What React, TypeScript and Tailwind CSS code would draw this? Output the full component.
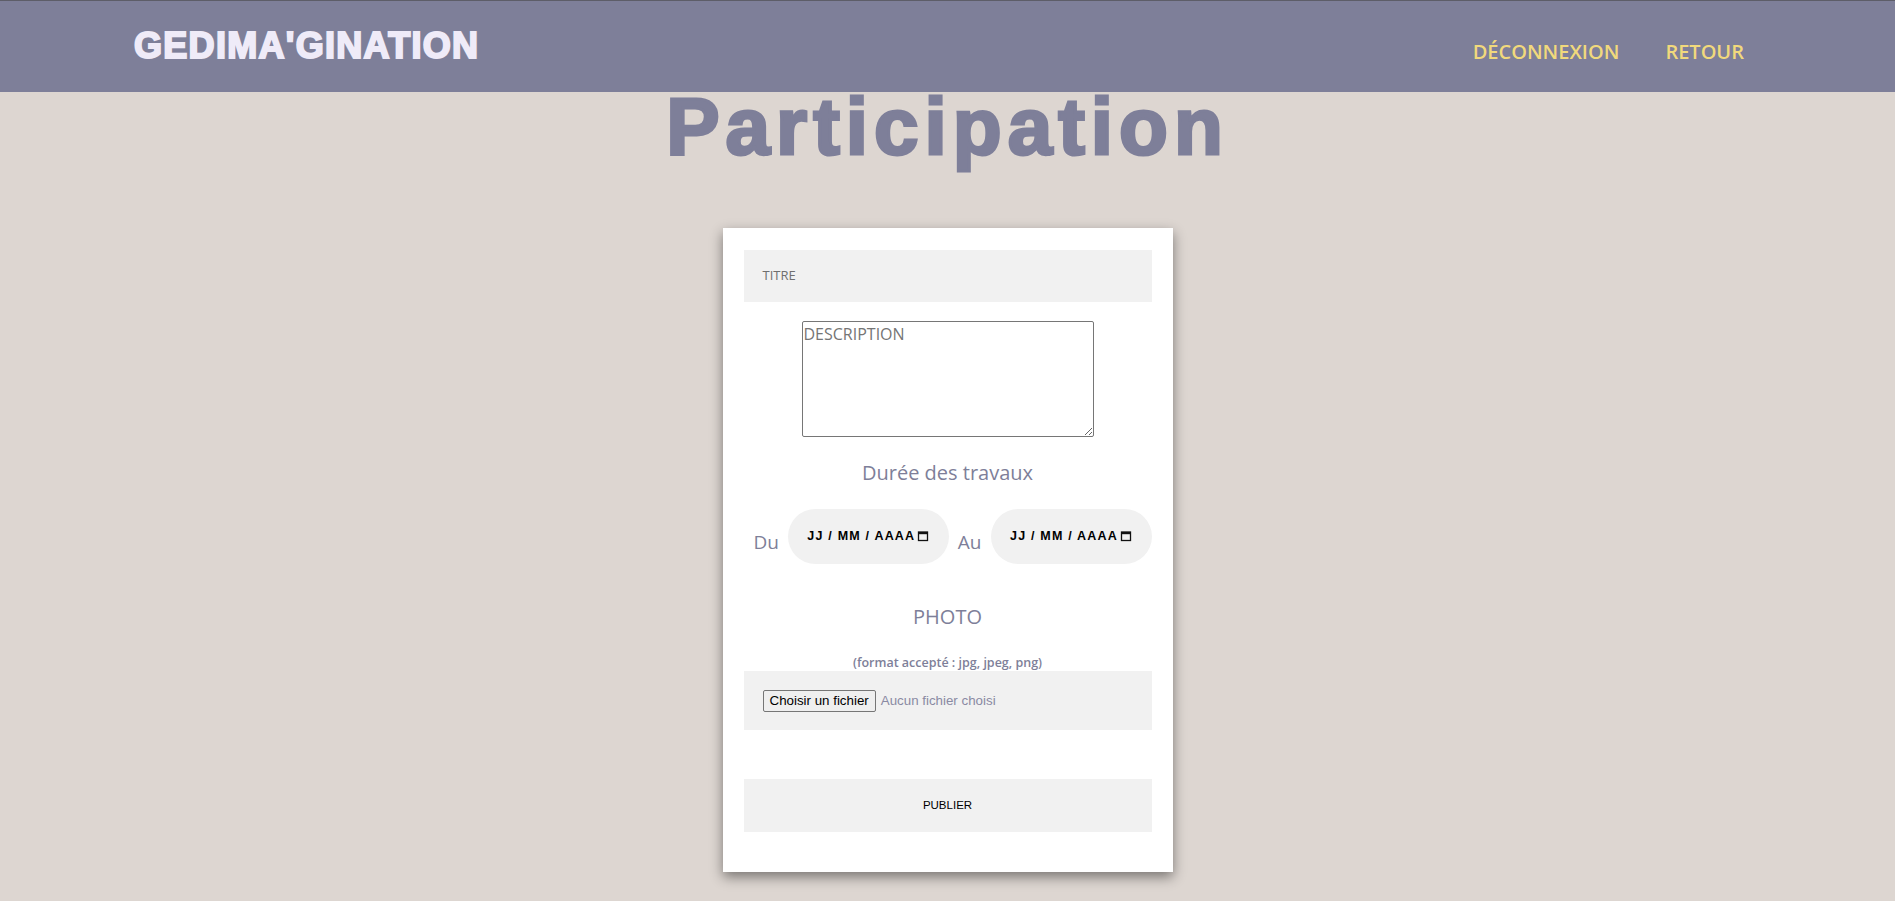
import React from "react"

const openSans = "font-['Open_Sans','Noto_Sans',sans-serif]"
const heavy = "font-['Liberation_Sans',Arial,sans-serif]"

function DateField() {
  return (
    <div className="flex h-[55px] w-[161px] items-center justify-center gap-[2px] rounded-full bg-[#f1f1f1] font-['Liberation_Sans',Arial,sans-serif] text-[12.5px] font-bold tracking-[1.2px] text-black">
      <span>JJ / MM / AAAA</span>
      <svg width="12" height="12" viewBox="0 0 12 12" className="mb-[1px]">
        <rect x="1.5" y="2" width="9" height="8.5" fill="none" stroke="#111" strokeWidth="1.3" />
        <rect x="1.5" y="2" width="9" height="2.2" fill="#111" />
      </svg>
    </div>
  )
}

export default function App() {
  return (
    <div className="min-h-[901px] bg-[#ddd6d1]">
      {/* header */}
      <header className="flex h-[92px] items-start justify-between border-t border-[#5d5d68] bg-[#7e7f99] pl-[134px] pr-[151px]">
        <div
          className={`${heavy} pt-[27px] text-[36px] font-bold leading-none tracking-[1.3px] text-[#efebf8] [-webkit-text-stroke:2px_#efebf8]`}
        >
          GEDIMA'GINATION
        </div>
        <nav className={`${openSans} flex gap-[46px] pt-[41px] text-[20px] font-semibold leading-none text-[#f1d97c]`}>
          <a href="#">DÉCONNEXION</a>
          <a href="#">RETOUR</a>
        </nav>
      </header>

      {/* title */}
      <h1
        className={`${heavy} mt-[4px] text-center text-[80px] font-bold leading-[62px] tracking-[6px] text-[#7e7f99] [-webkit-text-stroke:3px_#7e7f99]`}
      >
        Participation
      </h1>

      {/* form card */}
      <div className={`${openSans} mx-auto mt-[70px] w-[450px] bg-white px-[21px] pb-[40px] pt-[22px] shadow-[0_5px_12px_rgba(0,0,0,0.45)]`}>
        <div className="flex h-[52px] items-center bg-[#f1f1f1] pl-[19px] text-[13px] text-[#6f6f6f]">
          TITRE
        </div>

        <div className="mt-[19px] flex justify-center">
          <textarea
            placeholder="DESCRIPTION"
            className="h-[116px] w-[292px] resize rounded-[2px] border border-[#767676] bg-white p-[1px] text-[16px] leading-[22px] text-[#555] placeholder:text-[#757575]"
          />
        </div>

        <p className="mt-[22px] text-center text-[20px] leading-[27px] text-[#7e7f99]">Durée des travaux</p>

        <div className="mt-[23px] flex items-end justify-end gap-[9px]">
          <span className="pb-[12px] text-[19px] leading-none text-[#7e7f99]">Du</span>
          <DateField />
          <span className="pb-[12px] text-[19px] leading-none text-[#7e7f99]">Au</span>
          <DateField />
        </div>

        <p className="mt-[39px] text-center text-[20px] leading-[27px] text-[#7e7f99]">PHOTO</p>

        <p className="mt-[25px] text-center text-[12.5px] font-semibold leading-[16px] text-[#7e7f99]">
          (format accepté : jpg, jpeg, png)
        </p>

        <div className="flex h-[59px] items-center bg-[#f1f1f1] pl-[19px] font-['Liberation_Sans',Arial,sans-serif] text-[13.33px]">
          <span className="flex h-[22px] items-center rounded-[2px] border border-[#767676] bg-[#efefef] px-[6px] text-black">
            Choisir un fichier
          </span>
          <span className="ml-[5px] text-[#8a8aa3]">Aucun fichier choisi</span>
        </div>

        <button className="mt-[49px] flex h-[53px] w-full items-center justify-center bg-[#f1f1f1] font-['Liberation_Sans',Arial,sans-serif] text-[11.5px] text-black">
          PUBLIER
        </button>
      </div>
    </div>
  )
}
